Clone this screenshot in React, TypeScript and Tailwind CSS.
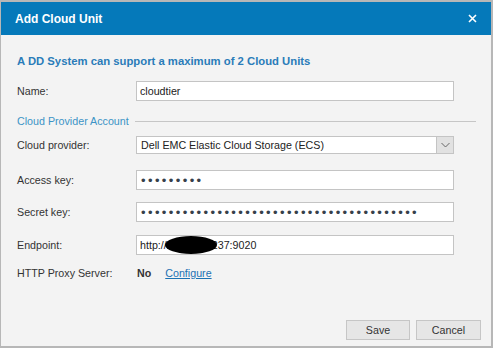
import React from "react";

const font = { fontFamily: '"Liberation Sans", Arial, sans-serif' };

function Row({ label, children, className = "" }: { label: string; children: React.ReactNode; className?: string }) {
  return (
    <div className={`flex items-center ${className}`}>
      <div className="w-[119px] text-[10.7px] text-[#333]">{label}</div>
      {children}
    </div>
  );
}

function Box({ children, h = "h-[20px]" }: { children?: React.ReactNode; h?: string }) {
  return (
    <div className={`relative w-[318px] ${h} border border-[#c4c4c4] bg-white flex items-center px-[3px] text-[10.7px] text-[#222] overflow-hidden`}>
      {children}
    </div>
  );
}

function Dots({ n }: { n: number }) {
  return (
    <span className="text-[13px] leading-none tracking-[2.4px] text-[#36404a] pl-[1px]">{"•".repeat(n)}</span>
  );
}

export default function App() {
  return (
    <div style={font} className="w-[493px] h-[348px] bg-[#b7b7b7] pt-[2px] pl-[1px] pr-[2px] pb-[2px]">
      <div className="w-full h-full flex flex-col bg-[#f3f3f3]">
        <div className="h-[33px] shrink-0 bg-[#0579ba] flex items-center justify-between pl-[14px] pr-[14px]">
          <span className="text-white font-bold text-[12px]">Add Cloud Unit</span>
          <svg width="9" height="9" viewBox="0 0 9 9">
            <path d="M1 1 L8 8 M8 1 L1 8" stroke="white" strokeWidth="1.6" />
          </svg>
        </div>
        <div className="flex-1 flex flex-col pl-[16px] pr-[15px]">
          <div className="mt-[19px] text-[11.3px] font-bold text-[#2a7cb9] leading-[14px]">
            A DD System can support a maximum of 2 Cloud Units
          </div>
          <Row label="Name:" className="mt-[13px]">
            <Box>cloudtier</Box>
          </Row>
          <div className="flex items-center mt-[12px]">
            <span className="text-[10.7px] text-[#3c93c6]">Cloud Provider Account</span>
            <div className="flex-1 h-px bg-[#c6c6c6] ml-[6px]" />
          </div>
          <Row label="Cloud provider:" className="mt-[7px]">
            <div className="relative w-[318px] h-[18px] border border-[#c4c4c4] bg-white flex items-center text-[10.7px] text-[#222]">
              <span className="pl-[4px] flex-1">Dell EMC Elastic Cloud Storage (ECS)</span>
              <div className="w-[17px] h-full bg-[#e1e1e1] border-l border-[#c4c4c4] flex items-center justify-center">
                <svg width="9" height="6" viewBox="0 0 9 6">
                  <path d="M0.5 1 L4.5 5 L8.5 1" stroke="#666" strokeWidth="1" fill="none" />
                </svg>
              </div>
            </div>
          </Row>
          <Row label="Access key:" className="mt-[16px]">
            <Box><Dots n={9} /></Box>
          </Row>
          <Row label="Secret key:" className="mt-[12px]">
            <Box><Dots n={40} /></Box>
          </Row>
          <Row label="Endpoint:" className="mt-[13px]">
            <Box>
              <span>http://</span>
              <span className="relative z-10 inline-block ml-[-2px] w-[52px] h-[18px] rounded-[50%] bg-black" />
              <span className="ml-[-5px]">237:9020</span>
            </Box>
          </Row>
          <Row label="HTTP Proxy Server:" className="mt-[10px]">
            <span className="text-[10.7px] font-bold text-[#333] ml-[1px]">No</span>
            <span className="text-[10.7px] text-[#1c72b4] underline ml-[14px]">Configure</span>
          </Row>
          <div className="mt-auto mb-[6px] flex justify-end gap-[6px] mr-[-5px]">
            <button className="w-[64px] h-[20px] bg-[#e6e6e6] border border-[#c6c6c6] text-[10.7px] text-[#333]">Save</button>
            <button className="w-[65px] h-[20px] bg-[#e6e6e6] border border-[#c6c6c6] text-[10.7px] text-[#333]">Cancel</button>
          </div>
        </div>
      </div>
    </div>
  );
}
